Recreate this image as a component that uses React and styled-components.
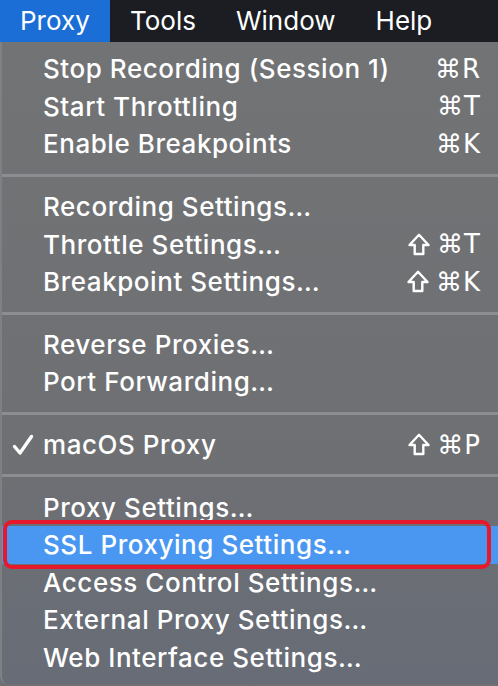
import styled, { createGlobalStyle } from 'styled-components';

const GlobalStyle = createGlobalStyle`
  html, body {
    margin: 0;
    padding: 0;
    width: 498px;
    height: 686px;
    overflow: hidden;
    background: #6e6f72;
  }
  body {
    font-family: Inter, "Liberation Sans", sans-serif;
  }
`;

const groups = [
  [
    { label: 'Stop Recording (Session 1)', keys: '⌘R' },
    { label: 'Start Throttling', keys: '⌘T' },
    { label: 'Enable Breakpoints', keys: '⌘K' },
  ],
  [
    { label: 'Recording Settings…' },
    { label: 'Throttle Settings…', keys: '⌘T', shift: true },
    { label: 'Breakpoint Settings…', keys: '⌘K', shift: true },
  ],
  [{ label: 'Reverse Proxies…' }, { label: 'Port Forwarding…' }],
  [{ label: 'macOS Proxy', keys: '⌘P', shift: true, checked: true }],
  [
    { label: 'Proxy Settings…' },
    { label: 'SSL Proxying Settings…', active: true },
    { label: 'Access Control Settings…' },
    { label: 'External Proxy Settings…' },
    { label: 'Web Interface Settings…' },
  ],
];

function CheckMark() {
  return (
    <svg width="22" height="22" viewBox="0 0 22 22">
      <path d="M2.5 12.5 L8 19 L19.5 2.5" fill="none" stroke="#ffffff" strokeWidth="3.4" strokeLinecap="round" strokeLinejoin="round" />
    </svg>
  );
}

function ShiftIcon() {
  return (
    <svg width="22" height="23" viewBox="0 0 22 23">
      <path d="M11 1.8 L20.5 12 L15.3 12 L15.3 21 L6.7 21 L6.7 12 L1.5 12 Z" fill="none" stroke="#ffffff" strokeWidth="2.4" strokeLinejoin="round" />
    </svg>
  );
}

export default function App() {
  return (
    <Page>
      <GlobalStyle />
      <MenuBar>
        <BarItem $open>Proxy</BarItem>
        <BarItem>Tools</BarItem>
        <BarItem>Window</BarItem>
        <BarItem>Help</BarItem>
      </MenuBar>
      <Menu>
        {groups.map((group, gi) => (
          <Group key={gi}>
            {gi > 0 && <Separator />}
            {group.map((item) => (
              <Row key={item.label} $active={item.active}>
                <Check>{item.checked && <CheckMark />}</Check>
                <Label>{item.label}</Label>
                {item.keys && (
                  <Keys>
                    {item.shift && <ShiftIcon />}
                    <span>{item.keys}</span>
                  </Keys>
                )}
                {item.active && <Callout />}
              </Row>
            ))}
          </Group>
        ))}
      </Menu>
    </Page>
  );
}

const Page = styled.div`
  display: flex;
  flex-direction: column;
  width: 498px;
  height: 686px;
`;

const MenuBar = styled.div`
  display: flex;
  height: 42px;
  background: #1b1d22;
  flex-shrink: 0;
`;

const BarItem = styled.div`
  display: flex;
  align-items: center;
  padding: 0 20px 2px;
  font-size: 26px;
  color: #ffffff;
  background: ${(p) => (p.$open ? '#1a6ed6' : 'transparent')};
  width: ${(p) => (p.$open ? '70px' : 'auto')};
`;

const Menu = styled.div`
  flex: 1;
  padding-top: 8px;
  background: linear-gradient(180deg, #727375 0%, #6f7073 60%, #676c76 100%);
  border-left: 2px solid #7f8083;
  border-bottom-left-radius: 8px;
  margin-bottom: 2px;
`;

const Group = styled.div`
  display: flex;
  flex-direction: column;
`;

const Separator = styled.div`
  height: 3px;
  margin: 11px 0;
  background: #8c8d90;
`;

const Row = styled.div`
  position: relative;
  display: flex;
  align-items: center;
  height: 37.6px;
  padding-right: 17px;
  color: #ffffff;
  font-size: 26px;
  font-weight: 500;
  letter-spacing: 0.55px;
  background: ${(p) => (p.$active ? '#4a97f2' : 'transparent')};
`;

const Check = styled.span`
  display: flex;
  align-items: center;
  width: 41px;
  padding-left: 10px;
  box-sizing: border-box;
`;

const Label = styled.span`
  flex: 1;
  white-space: nowrap;
`;

const Keys = styled.span`
  display: flex;
  align-items: center;
  gap: 7px;
  font-family: "DejaVu Sans", sans-serif;
  font-size: 26px;
  font-weight: 500;
  letter-spacing: 1px;
`;

const Callout = styled.div`
  position: absolute;
  left: 1px;
  right: 7px;
  top: -6px;
  bottom: -5px;
  border: 4px solid #e8182c;
  border-radius: 9px;
  pointer-events: none;
`;
